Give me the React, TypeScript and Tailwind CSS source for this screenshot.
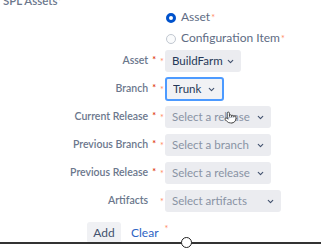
import { ChevronDown, Pointer } from "lucide-react";

const rows = [
  { label: "Asset", value: "BuildFarm", w: "w-[76px]", placeholder: false, req: true },
  { label: "Branch", value: "Trunk", w: "w-[59px]", placeholder: false, req: true, focus: true },
  { label: "Current Release", value: "Select a release", w: "w-[106px]", placeholder: true, req: true },
  { label: "Previous Branch", value: "Select a branch", w: "w-[106px]", placeholder: true, req: true },
  { label: "Previous Release", value: "Select a release", w: "w-[106px]", placeholder: true, req: true },
  { label: "Artifacts", value: "Select artifacts", w: "w-[116px]", placeholder: true, req: false },
];

function Select({ r }: { r: (typeof rows)[number] }) {
  return (
    <div
      className={`relative flex items-center rounded-[3px] pr-[6px] text-[11.5px] ${r.w} ${
        r.focus ? "h-[24px] border-2 border-[#4c9aff] bg-[#f1f2f5] pl-[6px]" : "h-[22px] bg-[#ebecf0] pl-[7px]"
      } ${r.placeholder ? "text-[#8993a4]" : "text-[#253858]"}`}
    >
      <span className="flex-1 overflow-hidden whitespace-nowrap">{r.value}</span>
      <ChevronDown size={9} strokeWidth={3} className="shrink-0 text-[#42526e]" />
    </div>
  );
}

export default function App() {
  return (
    <div className="relative h-[249px] w-[321px] overflow-hidden bg-white font-['Lato',sans-serif]">
      <div className="-mt-[6px] pl-[3px] text-[11.5px] font-semibold leading-[14px] text-[#6b778c]">
        SPL Assets<span className="align-top text-[9px] text-[#de350b]">*</span>
      </div>

      {/* radio group */}
      <div className="ml-[166px] mt-[2px] flex flex-col gap-[6px] text-[12px] leading-[14px] text-[#5e6c84]">
        <label className="flex items-center gap-[5px]">
          <span className="h-[10px] w-[10px] rounded-full border-[3px] border-[#0052cc] bg-white" />
          <span>
            Asset<span className="ml-[1px] text-[9px] text-[#ff8b66]">*</span>
          </span>
        </label>
        <label className="flex items-center gap-[5px]">
          <span className="h-[10px] w-[10px] rounded-full border border-[#c1c7d0] bg-[#fafbfc]" />
          <span>
            Configuration Item<span className="ml-[1px] text-[9px] text-[#ff8b66]">*</span>
          </span>
        </label>
      </div>

      <div className="mt-[1px] flex flex-col">
        {rows.map((r) => (
          <div key={r.label} className="flex h-[28px] items-center">
            <div className="w-[157px] pr-[1px] text-right text-[10.5px] font-semibold text-[#6b778c]">
              {r.label}
              <span className={`ml-[4px] align-top text-[9px] text-[#de350b] ${r.req ? "" : "invisible"}`}>*</span>
            </div>
            <span className="w-[8px] pl-[3px] text-[9px] leading-none text-[#ff8b66]">*</span>
            <Select r={r} />
          </div>
        ))}
      </div>

      <div className="mt-[7px] flex h-[21px] items-center">
        <div className="ml-[87px] flex h-[21px] w-[34px] items-center justify-center rounded-[3px] bg-[#f0f1f4] text-[12px] text-[#42526e]">
          Add
        </div>
        <span className="ml-[10px] text-[12px] text-[#2d64c4]">Clear</span>
        <span className="ml-[6px] -mt-[8px] text-[9px] text-[#ff8b66]">*</span>
      </div>

      {/* cursor over current release */}
      <Pointer size={13} strokeWidth={1.6} className="absolute left-[224px] top-[111px] fill-white text-[#333]" />

      {/* slider line overlay */}
      <div className="absolute left-0 right-0 top-[242px] h-[1.5px] bg-[#333]" />
      <div className="absolute left-[181px] top-[237px] h-[11px] w-[11px] rounded-full border-[1.5px] border-[#222] bg-white" />
    </div>
  );
}
